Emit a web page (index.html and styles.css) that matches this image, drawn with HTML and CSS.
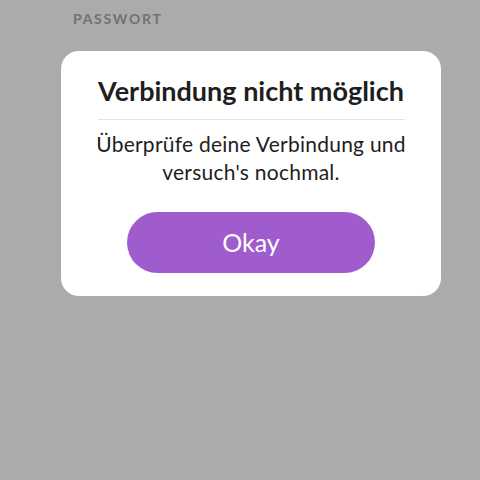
FILE: index.html
```html
<!DOCTYPE html>
<html lang="de">
<head>
  <meta charset="UTF-8">
  <title>Verbindung nicht möglich</title>
  <link rel="stylesheet" href="styles.css">
</head>
<body>
  <div class="field-label">PASSWORT</div>
  <div class="dialog">
    <h1 class="dialog-title">Verbindung nicht möglich</h1>
    <div class="dialog-line"></div>
    <p class="dialog-text">Überprüfe deine Verbindung und<br>versuch's nochmal.</p>
    <div class="dialog-btn">Okay</div>
  </div>
</body>
</html>
```

FILE: styles.css
```css
*{
  margin:0;
  padding:0;
  box-sizing: border-box;
}
body{
  background-color: #ababab;
  font-family: Lato, "Open Sans", sans-serif;
  width: 480px;
  height: 480px;
}
.field-label{
  padding: 10px 0 0 73px;
  height: 51px;
  font-size: 14px;
  font-weight: 700;
  letter-spacing: 1.7px;
  color: #727272;
}
.dialog{
  margin-left: 61px;
  width: 380px;
  height: 245px;
  background-color: #fff;
  border-radius: 18px;
  display: flex;
  flex-direction: column;
  align-items: center;
  padding-top: 24px;
}
.dialog-title{
  font-size: 27px;
  font-weight: 700;
  color: #1e1e1e;
  line-height: 32px;
}
.dialog-line{
  width: 307px;
  height: 1px;
  background-color: #e4e4e4;
  margin-top: 12px;
}
.dialog-text{
  margin-top: 10px;
  font-size: 21px;
  line-height: 28px;
  letter-spacing: 0.25px;
  text-align: center;
  color: #1e1e1e;
}
.dialog-btn{
  margin-top: 26px;
  width: 248px;
  height: 61px;
  border-radius: 31px;
  background-color: #a05ccd;
  color: #fff;
  font-size: 25px;
  line-height: 61px;
  text-align: center;
}
```
